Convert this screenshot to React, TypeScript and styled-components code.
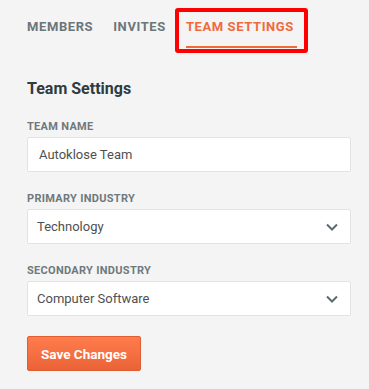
import React, { useState } from "react";
import styled, { createGlobalStyle } from "styled-components";

const GlobalStyle = createGlobalStyle`
  html, body {
    margin: 0;
    padding: 0;
    background: #f4f4f4;
  }
  body {
    font-family: Roboto, "Liberation Sans", Arial, sans-serif;
  }
`;

const Page = styled.div`
  padding: 0 18px 0 27px;
`;

const Tabs = styled.nav`
  display: flex;
  gap: 17px;
  padding-top: 19px;
`;

const Tab = styled.div<{ $active?: boolean; $marked?: boolean }>`
  position: relative;
  font-size: 13px;
  line-height: 15px;
  font-weight: 700;
  letter-spacing: 0.6px;
  text-transform: uppercase;
  color: ${(p) => (p.$active ? "#f06a3c" : "#6c7679")};
  padding: 0 3px 12px 0;
  border-bottom: 2px solid ${(p) => (p.$active ? "#f06a3c" : "transparent")};
  cursor: pointer;

  ${(p) =>
    p.$marked &&
    `
    &::after {
      content: "";
      position: absolute;
      left: -11px;
      right: -11px;
      top: -11px;
      bottom: -7px;
      border: 4px solid #ff0000;
      border-radius: 3px;
      pointer-events: none;
    }
  `}
`;

const Heading = styled.h2`
  margin: 31px 0 21px;
  font-size: 16px;
  line-height: 20px;
  font-weight: 700;
  color: #2f3b3f;
`;

const Form = styled.form`
  display: flex;
  flex-direction: column;
`;

const Field = styled.div`
  display: flex;
  flex-direction: column;
  margin-bottom: 20px;
`;

const Label = styled.label`
  font-size: 11px;
  line-height: 13px;
  font-weight: 700;
  letter-spacing: 0.3px;
  text-transform: uppercase;
  color: #6f797c;
  margin-bottom: 4px;
`;

const TextInput = styled.input`
  box-sizing: border-box;
  height: 35px;
  width: 100%;
  padding: 0 11px;
  border: 1px solid #e3e3e3;
  border-radius: 2px;
  background: #fff;
  font-family: inherit;
  font-size: 13px;
  color: #505050;
  outline: none;
`;

const SelectBox = styled.div`
  box-sizing: border-box;
  height: 35px;
  display: flex;
  align-items: center;
  justify-content: space-between;
  padding: 0 12px 0 9px;
  border: 1px solid #e3e3e3;
  border-radius: 2px;
  background: #fff;
  font-size: 13px;
  color: #505050;
  cursor: pointer;
`;

const Chevron = styled.svg`
  width: 12px;
  height: 8px;
  color: #5e6b6f;
`;

const SaveButton = styled.button`
  align-self: flex-start;
  height: 35px;
  padding: 0 13px;
  border: 1px solid #e05c32;
  border-radius: 2px;
  background: linear-gradient(to bottom, #ff7c4c, #ea6337);
  color: #fff;
  font-family: inherit;
  font-size: 13.5px;
  font-weight: 700;
  cursor: pointer;
`;

function Select({ value }: { value: string }) {
  return (
    <SelectBox>
      <span>{value}</span>
      <Chevron viewBox="0 0 12 8" fill="none">
        <path d="M1 1.5l5 5 5-5" stroke="currentColor" strokeWidth="2" />
      </Chevron>
    </SelectBox>
  );
}

export default function App() {
  const [name, setName] = useState("Autoklose Team");

  return (
    <Page>
      <GlobalStyle />
      <Tabs>
        <Tab>Members</Tab>
        <Tab>Invites</Tab>
        <Tab $active $marked>
          Team Settings
        </Tab>
      </Tabs>

      <Heading>Team Settings</Heading>

      <Form onSubmit={(e) => e.preventDefault()}>
        <Field>
          <Label>Team Name</Label>
          <TextInput value={name} onChange={(e) => setName(e.target.value)} />
        </Field>
        <Field>
          <Label>Primary Industry</Label>
          <Select value="Technology" />
        </Field>
        <Field>
          <Label>Secondary Industry</Label>
          <Select value="Computer Software" />
        </Field>
        <SaveButton type="submit">Save Changes</SaveButton>
      </Form>
    </Page>
  );
}
